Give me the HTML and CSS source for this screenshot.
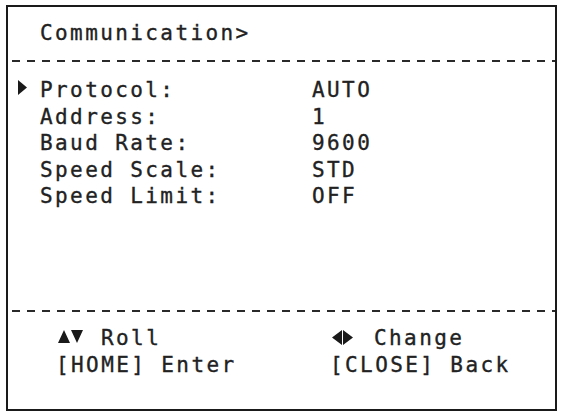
FILE: index.html
```html
<!DOCTYPE html>
<html lang="en">
<head>
    <meta charset="UTF-8">
    <meta name="viewport" content="width=device-width, initial-scale=1.0">
    <title>Communication Menu</title>
    <link rel="stylesheet" href="styles.css">
</head>
<body>
    <div class="screen">
        <div class="title">Communication&gt;</div>
        <div class="rule rule-top"></div>

        <!-- Menu items -->
        <div class="menu">
            <div class="row">
                <span class="marker"><svg width="9" height="15" viewBox="0 0 9 15"><path d="M0 0 L9 7.5 L0 15 Z" fill="#1a1a1a"/></svg></span>
                <span class="label">Protocol:</span>
                <span class="value">AUTO</span>
            </div>
            <div class="row">
                <span class="marker"></span>
                <span class="label">Address:</span>
                <span class="value">1</span>
            </div>
            <div class="row">
                <span class="marker"></span>
                <span class="label">Baud Rate:</span>
                <span class="value">9600</span>
            </div>
            <div class="row">
                <span class="marker"></span>
                <span class="label">Speed Scale:</span>
                <span class="value">STD</span>
            </div>
            <div class="row">
                <span class="marker"></span>
                <span class="label">Speed Limit:</span>
                <span class="value">OFF</span>
            </div>
        </div>

        <div class="rule"></div>

        <!-- Key hints -->
        <div class="hints">
            <div class="hint"><svg class="icon-updown" width="26" height="13" viewBox="0 0 26 13"><path d="M6 0 L12 13 L0 13 Z M13 0 L25 0 L19 13 Z" fill="#1a1a1a"/></svg>Roll</div>
            <div class="hint"><svg class="icon-leftright" width="21" height="15" viewBox="0 0 21 15"><path d="M0 7.5 L10 0 L10 15 Z M11 0 L21 7.5 L11 15 Z" fill="#1a1a1a"/></svg>Change</div>
            <div class="hint">[HOME] Enter</div>
            <div class="hint">[CLOSE] Back</div>
        </div>
    </div>
</body>
</html>
```

FILE: styles.css
```css
body {
    margin: 0;
    background-color: #ffffff;
    color: #222222;
    font-family: "DejaVu Sans Mono", "Liberation Mono", monospace;
    font-size: 21px;
    letter-spacing: 2.4px;
    -webkit-text-stroke: 0.35px #222222;
}
.screen {
    box-sizing: border-box;
    width: 551px;
    height: 406px;
    margin: 5px 0 0 6px;
    border: 2px solid #1a1a1a;
    display: flex;
    flex-direction: column;
    padding-top: 13px;
    padding-bottom: 30px;
}
.title {
    line-height: 26px;
    padding-left: 32px;
}
.rule {
    height: 2px;
    margin-left: 4px;
    background: repeating-linear-gradient(to right, #2a2a2a 0 8px, transparent 8px 15px);
}
.rule-top {
    margin-top: 14px;
}
.menu {
    flex: 1;
    padding-top: 15px;
}
.row {
    display: grid;
    grid-template-columns: 32px 272px 1fr;
    height: 26.5px;
    line-height: 26.5px;
}
.marker {
    padding-left: 10px;
}
.marker svg {
    display: block;
    margin-top: 3px;
}
.hints {
    display: grid;
    grid-template-columns: 274px 1fr;
    grid-auto-rows: 27px;
    line-height: 27px;
    padding-top: 13px;
    padding-left: 48px;
}
.hint {
    display: flex;
    align-items: baseline;
}
.hint svg {
    display: inline-block;
    flex: none;
}
.icon-updown {
    margin-left: 2px;
    margin-right: 17px;
    position: relative;
    top: -2px;
}
.icon-leftright {
    margin-left: 2px;
    margin-right: 21px;
}
```
